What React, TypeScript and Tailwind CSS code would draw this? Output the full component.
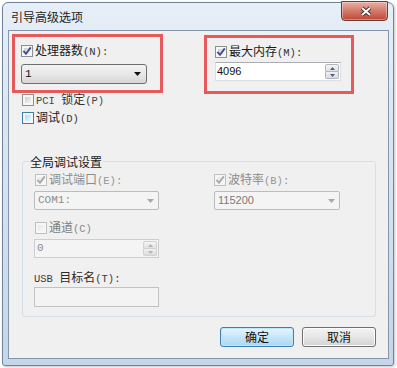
import React from "react";

// splits a label into CJK and ASCII runs, ASCII gets the narrow mono face like SimSun
function Txt({ children, className = "" }: { children: string; className?: string }) {
  const parts = children.split(/([\x20-\x7e]+)/).filter(Boolean);
  return (
    <span className={`font-['Noto_Sans_CJK_SC',sans-serif] text-[12px] leading-[12px] whitespace-pre ${className}`}>
      {parts.map((p, i) =>
        /^[\x20-\x7e]+$/.test(p) ? (
          <span key={i} className="font-['Liberation_Mono',monospace] text-[10.5px] opacity-90">
            {p}
          </span>
        ) : (
          <span key={i}>{p}</span>
        )
      )}
    </span>
  );
}

type BoxState = "normal" | "hover" | "disabled";

function CheckBox({ checked = false, state = "normal" }: { checked?: boolean; state?: BoxState }) {
  const outer =
    state === "hover" ? "border-[#3c7fb1]" : state === "disabled" ? "border-[#bfbfbf]" : "border-[#8e8f8f]";
  const inner =
    state === "hover"
      ? "from-[#aedcf6] to-[#e6f5fc]"
      : state === "disabled"
      ? "from-[#e8e8e8] to-[#f6f6f6]"
      : "from-[#cbced3] to-[#f6f6f6]";
  const tick = state === "disabled" ? "#a9a9a9" : "#3f5190";
  return (
    <div className={`relative w-[12px] h-[12px] shrink-0 border ${outer} bg-[#f6f6f6] p-[2px]`}>
      <div className={`w-full h-full bg-gradient-to-br ${inner}`} />
      {checked && (
        <svg className="absolute inset-0" width="10" height="10" viewBox="0 0 10 10">
          <path d="M1.4 4.8 L4 7.8 L8.8 1.4" fill="none" stroke={tick} strokeWidth="1.9" />
        </svg>
      )}
    </div>
  );
}

function CheckRow({
  label,
  checked,
  state = "normal",
  color = "text-[#1a1a1a]",
  className = "",
}: {
  label: string;
  checked?: boolean;
  state?: BoxState;
  color?: string;
  className?: string;
}) {
  return (
    <div className={`flex items-center h-[12px] gap-[2px] ${className}`}>
      <CheckBox checked={checked} state={state} />
      <Txt className={color}>{label}</Txt>
    </div>
  );
}

function Arrow({ color }: { color: string }) {
  return (
    <svg width="7" height="4" viewBox="0 0 7 4">
      <path d="M0 0 H7 L3.5 4 Z" fill={color} />
    </svg>
  );
}

function SpinButtons({ disabled }: { disabled?: boolean }) {
  const c = disabled ? "#b4b4b4" : "#4d5f86";
  const b = disabled ? "border-[#d2d2d2]" : "border-[#b3b7bd]";
  return (
    <div className="flex flex-col w-[15px] h-full py-[1px] pr-[1px]">
      <div className={`flex-1 flex items-center justify-center border ${b} rounded-t-[2px] bg-gradient-to-b from-[#f5f5f5] to-[#e1e1e1]`}>
        <svg width="5" height="3" viewBox="0 0 5 3">
          <path d="M0 3 H5 L2.5 0 Z" fill={c} />
        </svg>
      </div>
      <div className={`flex-1 flex items-center justify-center border border-t-0 ${b} rounded-b-[2px] bg-gradient-to-b from-[#f0f0f0] to-[#dcdcdc]`}>
        <svg width="5" height="3" viewBox="0 0 5 3">
          <path d="M0 0 H5 L2.5 3 Z" fill={c} />
        </svg>
      </div>
    </div>
  );
}

function DisabledCombo({ value, mono, w }: { value: string; mono?: boolean; w: string }) {
  return (
    <div className={`flex items-center justify-between ${w} h-[19px] rounded-[2px] border border-[#b9bdc0] bg-[#f4f4f4] pl-[3px] pr-[4px]`}>
      <span
        className={
          mono
            ? "font-['Liberation_Mono',monospace] text-[11px] text-[#8c8c8c]"
            : "font-['Liberation_Sans',sans-serif] text-[11px] text-[#7a7a7a]"
        }
      >
        {value}
      </span>
      <Arrow color="#a8a8a8" />
    </div>
  );
}

function WinButton({ label, primary }: { label: string; primary?: boolean }) {
  return (
    <div
      className={`flex items-center justify-center w-[74px] h-[20px] rounded-[3px] border ${
        primary
          ? "border-[#3c7fb1] bg-gradient-to-b from-[#e8f5fc] via-[#c6e6f8] to-[#a7d8f3] shadow-[inset_0_0_0_1px_#bfe6fb]"
          : "border-[#707070] bg-gradient-to-b from-[#f4f4f4] via-[#e6e6e6] to-[#d3d3d3] shadow-[inset_0_0_0_1px_#fbfbfb]"
      }`}
    >
      <Txt className="text-[#111]">{label}</Txt>
    </div>
  );
}

export default function App() {
  return (
    <div className="w-[397px] h-[368px] bg-white pl-[2px] pt-[2px]">
      <div className="relative w-[392px] h-[364px] rounded-t-[6px] rounded-b-[3px] border border-[#71849b] bg-gradient-to-b from-[#e6eef7] via-[#d6e2f0] to-[#c5d6ea] shadow-[1px_1px_3px_rgba(0,0,0,0.25)]">
        {/* title */}
        <div className="flex items-center h-[27px] pl-[8px]">
          <Txt className="text-[#1e1e1e]">引导高级选项</Txt>
        </div>

        {/* close */}
        <div className="absolute top-[-2px] right-[5px] flex items-center justify-center w-[47px] h-[20px] rounded-b-[4px] border border-[#6e3a33] bg-gradient-to-b from-[#eaaea2] via-[#d27a6b] to-[#c2442f] shadow-[inset_0_0_0_1px_rgba(255,255,255,0.35)]">
          <svg width="14" height="11" viewBox="0 0 14 11" className="ml-[2px] mt-[1px]">
            <path d="M3 2 L11 9 M11 2 L3 9" stroke="#4b2520" strokeWidth="3.8" />
            <path d="M3 2 L11 9 M11 2 L3 9" stroke="#ffffff" strokeWidth="2" />
          </svg>
        </div>

        {/* client area */}
        <div className="ml-[5px] w-[381px] h-[329px] border border-[#8596ab] bg-[#f0f0f0]">
          <div className="flex items-start pt-[3px] pl-[3px]">
            <div className="w-[151px] h-[59px] border-[3px] border-[#e65a5c] pt-[8px] pl-[6px]">
              <CheckRow label="处理器数(N):" checked />
              <div className="mt-[7px] flex items-center justify-between w-[126px] h-[20px] rounded-[3px] border border-[#707070] bg-gradient-to-b from-[#f3f3f3] via-[#e8e8e8] to-[#d6d6d6] pl-[3px] pr-[5px]">
                <span className="font-['Liberation_Mono',monospace] text-[11px] text-[#111]">1</span>
                <Arrow color="#111" />
              </div>
            </div>

            <div className="ml-[41px] mt-[1px] w-[150px] h-[59px] border-[3px] border-[#e65a5c] pt-[8px] pl-[8px]">
              <CheckRow label="最大内存(M):" checked />
              <div className="mt-[4px] flex w-[126px] h-[19px] border border-[#dbdfe6] border-t-[#abadb3] bg-white">
                <div className="flex-1 flex items-center pl-[1px]">
                  <span className="font-['Liberation_Sans',sans-serif] text-[11px] text-[#111]">4096</span>
                </div>
                <SpinButtons />
              </div>
            </div>
          </div>

          <div className="pl-[13px]">
            <CheckRow label="PCI 锁定(P)" color="text-[#333]" />
            <CheckRow label="调试(D)" state="hover" className="mt-[6px]" />
          </div>

          <fieldset className="ml-[13px] mt-[31px] w-[354px] rounded-[3px] border border-[#d5dfe5] pb-[9px]">
            <legend className="ml-[6px] px-[1px]">
              <Txt className="text-[#1a1a1a] leading-[13px] block">全局调试设置</Txt>
            </legend>

            <div className="flex pl-[11px] mt-[6px]">
              <div className="w-[125px]">
                <CheckRow label="调试端口(E):" checked state="disabled" color="text-[#8c8c8c]" className="ml-[1px]" />
                <div className="mt-[5px]">
                  <DisabledCombo value="COM1:" mono w="w-[125px]" />
                </div>

                <CheckRow label="通道(C)" state="disabled" color="text-[#7c7c7c]" className="ml-[1px] mt-[12px]" />
                <div className="mt-[5px] flex w-[125px] h-[19px] border border-[#cdcdcd] bg-[#f4f4f4]">
                  <div className="flex-1 flex items-center pl-[2px]">
                    <span className="font-['Liberation_Mono',monospace] text-[11px] text-[#8c8c8c]">0</span>
                  </div>
                  <SpinButtons disabled />
                </div>

                <div className="mt-[14px] h-[12px] flex items-center">
                  <Txt className="text-[#2a2a2a]">USB 目标名(T):</Txt>
                </div>
                <div className="mt-[3px] w-[125px] h-[20px] border border-[#c2c2c2] bg-[#f3f3f3]" />
              </div>

              <div className="ml-[55px] w-[126px]">
                <CheckRow label="波特率(B):" checked state="disabled" color="text-[#8c8c8c]" />
                <div className="mt-[5px]">
                  <DisabledCombo value="115200" w="w-[126px]" />
                </div>
              </div>
            </div>
          </fieldset>

          <div className="flex justify-end gap-[8px] pr-[12px] mt-[10px]">
            <WinButton label="确定" primary />
            <WinButton label="取消" />
          </div>
        </div>
      </div>
    </div>
  );
}
